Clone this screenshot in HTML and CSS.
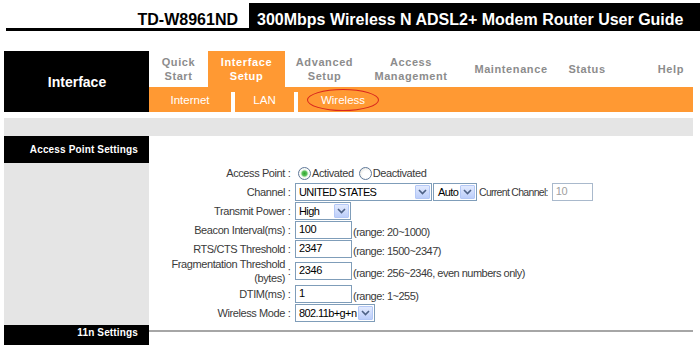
FILE: index.html
```html
<!doctype html>
<html lang="en">
<head>
    <meta charset="UTF-8">
    <title>Interface Setup - Wireless</title>
    <link rel="stylesheet" href="styles.css">
</head>
<body>
<div class="header">
    <div class="header_model">TD-W8961ND</div>
    <div class="header_title">300Mbps Wireless N ADSL2+ Modem Router User Guide</div>
</div>
<div class="page">
    <div class="nav">
        <div class="nav_logo">Interface</div>
        <div class="nav_main">
            <div class="nav_tabs">
                <div class="nav_tab tab_quick">Quick<br>Start</div>
                <div class="nav_tab tab_interface nav_tab_active">Interface<br>Setup</div>
                <div class="nav_tab tab_advanced">Advanced<br>Setup</div>
                <div class="nav_tab tab_access">Access<br>Management</div>
                <div class="nav_tab tab_maintenance">Maintenance</div>
                <div class="nav_tab tab_status">Status</div>
                <div class="nav_tab tab_help">Help</div>
            </div>
            <div class="nav_sub">
                <div class="nav_sub_item sub_internet">Internet</div>
                <div class="nav_sub_sep"></div>
                <div class="nav_sub_item sub_lan">LAN</div>
                <div class="nav_sub_sep"></div>
                <div class="nav_sub_item sub_wireless"><span class="nav_sub_mark">Wireless</span></div>
            </div>
        </div>
    </div>

    <div class="bar"></div>

    <div class="section_head">
        <div class="section_title">Access Point Settings</div>
    </div>
    <div class="section_body">
        <div class="section_side"></div>
        <div class="form">
            <div class="row row_first">
                <div class="row_label">Access Point</div>
                <div class="row_colon">:</div>
                <div class="row_value">
                    <input type="radio" class="radio" name="ap" checked><span class="radio_text">Activated</span>
                    <input type="radio" class="radio" name="ap"><span class="radio_text">Deactivated</span>
                </div>
            </div>
            <div class="row">
                <div class="row_label">Channel</div>
                <div class="row_colon">:</div>
                <div class="row_value">
                    <div class="select select_channel">
                        <span class="select_text">UNITED STATES</span>
                        <span class="select_btn"><svg width="9" height="6" viewBox="0 0 9 6"><path d="M1 1l3.5 3.5L8 1" fill="none" stroke="#4d6185" stroke-width="1.6"/></svg></span>
                    </div>
                    <div class="select select_auto">
                        <span class="select_text">Auto</span>
                        <span class="select_btn"><svg width="9" height="6" viewBox="0 0 9 6"><path d="M1 1l3.5 3.5L8 1" fill="none" stroke="#4d6185" stroke-width="1.6"/></svg></span>
                    </div>
                    <span class="current_label">Current Channel:</span>
                    <input class="text_input input_current" value="10" disabled>
                </div>
            </div>
            <div class="row">
                <div class="row_label">Transmit Power</div>
                <div class="row_colon">:</div>
                <div class="row_value">
                    <div class="select select_power">
                        <span class="select_text">High</span>
                        <span class="select_btn"><svg width="9" height="6" viewBox="0 0 9 6"><path d="M1 1l3.5 3.5L8 1" fill="none" stroke="#4d6185" stroke-width="1.6"/></svg></span>
                    </div>
                </div>
            </div>
            <div class="row">
                <div class="row_label">Beacon Interval(ms)</div>
                <div class="row_colon">:</div>
                <div class="row_value">
                    <input class="text_input" value="100">
                    <span class="hint">(range: 20~1000)</span>
                </div>
            </div>
            <div class="row">
                <div class="row_label">RTS/CTS Threshold</div>
                <div class="row_colon">:</div>
                <div class="row_value">
                    <input class="text_input" value="2347">
                    <span class="hint">(range: 1500~2347)</span>
                </div>
            </div>
            <div class="row row_tall">
                <div class="row_label">Fragmentation Threshold<br>(bytes)</div>
                <div class="row_colon">:</div>
                <div class="row_value">
                    <input class="text_input" value="2346">
                    <span class="hint">(range: 256~2346, even numbers only)</span>
                </div>
            </div>
            <div class="row">
                <div class="row_label">DTIM(ms)</div>
                <div class="row_colon">:</div>
                <div class="row_value">
                    <input class="text_input" value="1">
                    <span class="hint">(range: 1~255)</span>
                </div>
            </div>
            <div class="row">
                <div class="row_label">Wireless Mode</div>
                <div class="row_colon">:</div>
                <div class="row_value">
                    <div class="select select_mode">
                        <span class="select_text">802.11b+g+n</span>
                        <span class="select_btn"><svg width="9" height="6" viewBox="0 0 9 6"><path d="M1 1l3.5 3.5L8 1" fill="none" stroke="#4d6185" stroke-width="1.6"/></svg></span>
                    </div>
                </div>
            </div>
        </div>
    </div>

    <div class="section_head">
        <div class="section_title section_title_tail">11n Settings</div>
        <div class="section_rule"></div>
    </div>
</div>
</body>
</html>
```
FILE: styles.css
```css
* {
    margin: 0;
    padding: 0;
    box-sizing: border-box;
}

body {
    width: 700px;
    height: 345px;
    overflow: hidden;
    background-color: #fff;
    font-family: "Liberation Sans", Arial, sans-serif;
    color: #000;
}

/* top title strip */
.header {
    display: flex;
    height: 28px;
    margin-top: 3px;
    font-size: 16px;
    font-weight: bold;
    line-height: 16px;
}

.header_model {
    width: 243px;
    margin-left: 6px;
    padding: 9px 11px 0 0;
    border-bottom: 3px solid #000;
    text-align: right;
}

.header_title {
    flex: 1;
    padding: 9px 0 0 8px;
    background-color: #000;
    color: #fff;
}

.page {
    width: 689px;
    margin: 20px 0 0 4px;
}

/* menu */
.nav {
    display: flex;
    height: 61px;
}

.nav_logo {
    display: flex;
    justify-content: center;
    align-items: center;
    width: 145px;
    padding-left: 1px;
    background-color: #000;
    color: #fff;
    font-size: 14px;
    font-weight: bold;
}

.nav_main {
    flex: 1;
    display: flex;
    flex-direction: column;
}

.nav_tabs {
    display: flex;
    height: 36px;
}

.nav_tab {
    display: flex;
    justify-content: center;
    align-items: center;
    text-align: center;
    font-size: 11px;
    font-weight: bold;
    line-height: 14px;
    letter-spacing: 0.6px;
    color: #8c8c8c;
}

.nav_tab_active {
    background-color: #f93;
    color: #fff;
}

.tab_quick { width: 59px; }
.tab_interface { width: 77px; }
.tab_advanced { width: 79px; }
.tab_access { width: 94px; }
.tab_maintenance { width: 106px; }
.tab_status { width: 46px; }

.tab_help {
    flex: 1;
    justify-content: flex-end;
    padding-right: 9px;
}

.nav_sub {
    display: flex;
    height: 25px;
    background-color: #f93;
    color: #fff;
    font-size: 11.5px;
}

.nav_sub_item {
    display: flex;
    justify-content: center;
    align-items: center;
}

.nav_sub_sep {
    width: 4px;
    margin-top: 5px;
    background-color: #fff;
}

.sub_internet { width: 82px; }
.sub_lan { width: 59px; }
.sub_wireless { width: 90px; }

.nav_sub_mark {
    padding: 3px 13px;
    border: 1.5px solid #d8261e;
    border-radius: 50%;
    line-height: 14px;
}

.bar {
    height: 18px;
    margin-top: 6px;
    background-color: #e5e5e5;
}

/* sections */
.section_head {
    display: flex;
}

.section_title {
    width: 145px;
    height: 27px;
    padding-right: 11px;
    background-color: #000;
    color: #fff;
    font-size: 10px;
    font-weight: bold;
    letter-spacing: 0.15px;
    line-height: 27px;
    text-align: right;
}

.section_title_tail {
    padding-top: 1px;
    line-height: 14px;
}

.section_rule {
    flex: 1;
    height: 2px;
    margin-top: 5px;
    background-color: #a6a6a6;
}

.section_body {
    display: flex;
}

.section_side {
    width: 145px;
    background-color: #e5e5e5;
}

.form {
    flex: 1;
    padding: 1px 0 3px;
}

.row {
    display: flex;
    align-items: center;
    height: 19px;
    font-size: 11px;
    letter-spacing: -0.4px;
    color: #3a3a3a;
}

.row_first {
    height: 18px;
}

.row_tall {
    height: 26px;
}

.row_label {
    width: 136px;
    text-align: right;
    line-height: 14px;
}

.row_colon {
    width: 8px;
    text-align: center;
}

.row_value {
    display: flex;
    align-items: center;
    margin-left: 2px;
}

.radio {
    appearance: none;
    width: 13px;
    height: 13px;
    margin: 0 1px 0 3px;
    border: 1px solid #5f7899;
    border-radius: 50%;
    background: radial-gradient(circle at 60% 60%, #fff 0, #fff 40%, #dcdcd4 100%);
}

.radio:checked {
    background: radial-gradient(circle, #2fa32f 0, #5cc45c 2.5px, #d6eed6 3.5px, #fff 4.5px, #e6e6de 100%);
}

.radio_text {
    margin-right: 2px;
}

.select {
    display: flex;
    height: 18px;
    border: 1px solid #7f9db9;
    background-color: #fff;
    color: #000;
}

.select_text {
    flex: 1;
    padding-left: 3px;
    line-height: 16px;
    letter-spacing: -0.6px;
    white-space: nowrap;
    overflow: hidden;
}

.select_btn {
    display: flex;
    justify-content: center;
    align-items: center;
    width: 15px;
    margin: 1px;
    border: 1px solid #b4c8f6;
    border-radius: 1px;
    background: linear-gradient(#e2eafe, #bccefa);
}

.select_channel { width: 137px; }
.select_auto { width: 44px; margin-left: 1px; }
.select_power { width: 56px; }
.select_mode { width: 80px; }

.select_auto .select_text {
    padding-left: 4px;
}

.current_label {
    margin: 0 4px 0 2px;
    font-size: 10.5px;
    letter-spacing: -0.7px;
    white-space: nowrap;
}

.text_input {
    width: 57px;
    height: 18px;
    padding: 0 3px 2px;
    border: 1px solid #7f9db9;
    outline: none;
    background-color: #fff;
    font: inherit;
    letter-spacing: inherit;
    line-height: 14px;
    color: #000;
}

.input_current {
    width: 41px;
    border-color: #a9b9cc;
    color: #a0a0a0;
}

.hint {
    align-self: flex-end;
    margin-left: 1px;
    line-height: 13px;
    letter-spacing: -0.5px;
    white-space: nowrap;
}
```
